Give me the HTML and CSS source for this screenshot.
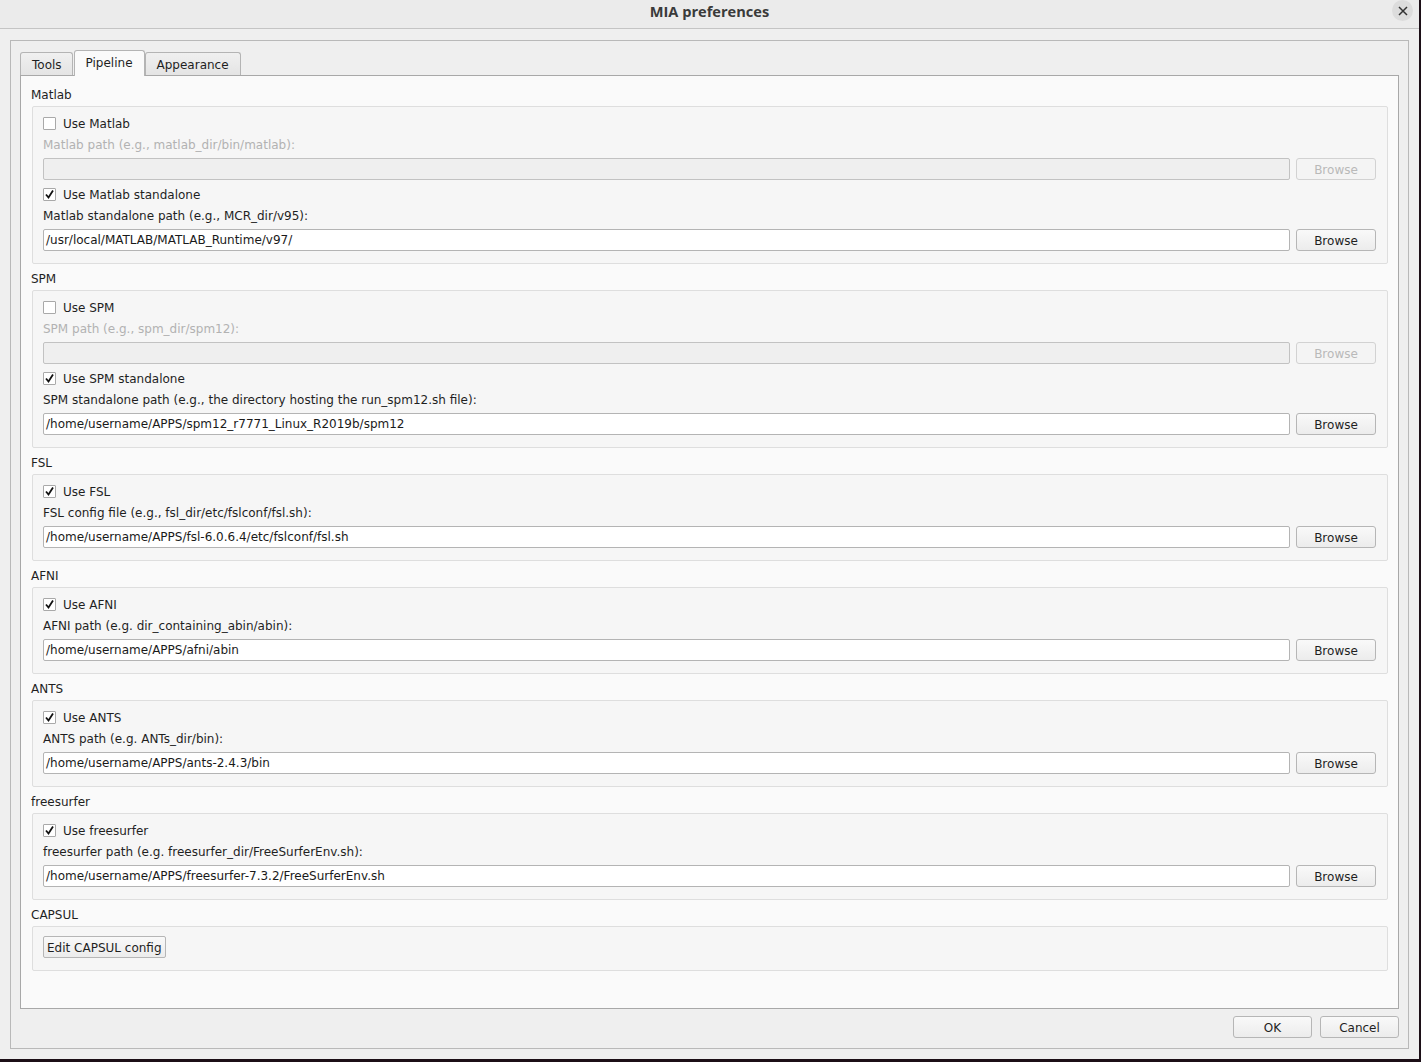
FILE: index.html
```html
<!DOCTYPE html>
<html>
<head>
<meta charset="utf-8">
<link rel="stylesheet" href="styles.css">
</head>
<body>
<div class="dialog">
  <div class="titlebar">
    <span class="title">MIA preferences</span>
    <span class="close"><svg width="10" height="10" viewBox="0 0 10 10"><path d="M1 1L9 9M9 1L1 9" stroke="#333" stroke-width="1.5"/></svg></span>
  </div>
  <div class="frame">
    <div class="tabs">
      <div class="tab first">Tools</div>
      <div class="tab active">Pipeline</div>
      <div class="tab">Appearance</div>
    </div>
    <div class="pane">
      <div class="sec-label">Matlab</div>
      <div class="group">
        <div class="check"><span class="box"></span>Use Matlab</div>
        <div class="lbl disabled">Matlab path (e.g., matlab_dir/bin/matlab):</div>
        <div class="field"><div class="input disabled"></div><div class="btn disabled">Browse</div></div>
        <div class="check"><span class="box on"><svg width="11" height="11" viewBox="0 0 11 11"><path d="M2 5.5L4.5 8.5L9 1.5" fill="none" stroke="#111" stroke-width="1.8"/></svg></span>Use Matlab standalone</div>
        <div class="lbl">Matlab standalone path (e.g., MCR_dir/v95):</div>
        <div class="field"><div class="input">/usr/local/MATLAB/MATLAB_Runtime/v97/</div><div class="btn">Browse</div></div>
      </div>

      <div class="sec-label">SPM</div>
      <div class="group">
        <div class="check"><span class="box"></span>Use SPM</div>
        <div class="lbl disabled">SPM path (e.g., spm_dir/spm12):</div>
        <div class="field"><div class="input disabled"></div><div class="btn disabled">Browse</div></div>
        <div class="check"><span class="box on"><svg width="11" height="11" viewBox="0 0 11 11"><path d="M2 5.5L4.5 8.5L9 1.5" fill="none" stroke="#111" stroke-width="1.8"/></svg></span>Use SPM standalone</div>
        <div class="lbl">SPM standalone path (e.g., the directory hosting the run_spm12.sh file):</div>
        <div class="field"><div class="input">/home/username/APPS/spm12_r7771_Linux_R2019b/spm12</div><div class="btn">Browse</div></div>
      </div>

      <div class="sec-label">FSL</div>
      <div class="group">
        <div class="check"><span class="box on"><svg width="11" height="11" viewBox="0 0 11 11"><path d="M2 5.5L4.5 8.5L9 1.5" fill="none" stroke="#111" stroke-width="1.8"/></svg></span>Use FSL</div>
        <div class="lbl">FSL config file (e.g., fsl_dir/etc/fslconf/fsl.sh):</div>
        <div class="field"><div class="input">/home/username/APPS/fsl-6.0.6.4/etc/fslconf/fsl.sh</div><div class="btn">Browse</div></div>
      </div>

      <div class="sec-label">AFNI</div>
      <div class="group">
        <div class="check"><span class="box on"><svg width="11" height="11" viewBox="0 0 11 11"><path d="M2 5.5L4.5 8.5L9 1.5" fill="none" stroke="#111" stroke-width="1.8"/></svg></span>Use AFNI</div>
        <div class="lbl">AFNI path (e.g. dir_containing_abin/abin):</div>
        <div class="field"><div class="input">/home/username/APPS/afni/abin</div><div class="btn">Browse</div></div>
      </div>

      <div class="sec-label">ANTS</div>
      <div class="group">
        <div class="check"><span class="box on"><svg width="11" height="11" viewBox="0 0 11 11"><path d="M2 5.5L4.5 8.5L9 1.5" fill="none" stroke="#111" stroke-width="1.8"/></svg></span>Use ANTS</div>
        <div class="lbl">ANTS path (e.g. ANTs_dir/bin):</div>
        <div class="field"><div class="input">/home/username/APPS/ants-2.4.3/bin</div><div class="btn">Browse</div></div>
      </div>

      <div class="sec-label">freesurfer</div>
      <div class="group">
        <div class="check"><span class="box on"><svg width="11" height="11" viewBox="0 0 11 11"><path d="M2 5.5L4.5 8.5L9 1.5" fill="none" stroke="#111" stroke-width="1.8"/></svg></span>Use freesurfer</div>
        <div class="lbl">freesurfer path (e.g. freesurfer_dir/FreeSurferEnv.sh):</div>
        <div class="field"><div class="input">/home/username/APPS/freesurfer-7.3.2/FreeSurferEnv.sh</div><div class="btn">Browse</div></div>
      </div>

      <div class="sec-label">CAPSUL</div>
      <div class="group">
        <div class="row"><div class="btn capsul">Edit CAPSUL config</div></div>
      </div>
    </div>
    <div class="footer">
      <div class="btn wide">OK</div>
      <div class="btn wide">Cancel</div>
    </div>
  </div>
</div>
</body>
</html>
```

FILE: styles.css
```css
* { box-sizing: border-box; }
html, body { margin: 0; padding: 0; }
body {
  background: #1c0f17;
  width: 1421px;
  height: 1062px;
  overflow: hidden;
  font-family: "DejaVu Sans", sans-serif;
  font-size: 12px;
  color: #1f1f1f;
}
.dialog {
  width: 1419px;
  height: 1059px;
  background: #efefef;
}
.titlebar {
  height: 29px;
  background: #ebebeb;
  border-bottom: 1px solid #c4c4c4;
  display: flex;
  align-items: center;
  justify-content: center;
  position: relative;
}
.title {
  font-family: "Open Sans", "DejaVu Sans", sans-serif;
  font-weight: 700;
  font-size: 14.6px;
  color: #3a3a3a;
  margin-top: -7px;
}
.close {
  position: absolute;
  right: 6px;
  top: 0px;
  width: 21px;
  height: 21px;
  border-radius: 50%;
  background: #dcdcdc;
  display: flex;
  align-items: center;
  justify-content: center;
}
.frame {
  margin: 11px 0 0 10px;
  width: 1399px;
  height: 1009px;
  border: 1px solid #b9b9b9;
  padding: 9px 9px 0 9px;
}
.tabs {
  display: flex;
  align-items: flex-end;
  height: 25px;
  position: relative;
  z-index: 2;
}
.tab {
  height: 23px;
  padding: 2px 11px 0 11px;
  border: 1px solid #b4b4b4;
  border-bottom: none;
  border-radius: 3px 3px 0 0;
  background: linear-gradient(#f0f0f0, #e4e4e4);
  display: flex;
  align-items: center;
  color: #1f1f1f;
}
.tab.first { padding: 2px 10px 0 11px; }
.tab.active {
  height: 26px;
  margin-bottom: -1px;
  background: #fafafa;
  padding: 0 11px 2px 11px;
  margin-left: 1px;
}
.pane {
  height: 934px;
  background: #fafafa;
  border: 1px solid #a8a8a8;
  padding: 11px 10px 0 11px;
  display: flex;
  flex-direction: column;
}
.sec-label {
  height: 14px;
  line-height: 16px;
  margin: 0 0 5px -1px;
}
.group {
  background: #f6f6f6;
  border: 1px solid #dedede;
  border-radius: 2px;
  padding: 9px 11px 12px 10px;
  display: flex;
  flex-direction: column;
  gap: 7px;
  margin-bottom: 7px;
}
.check {
  height: 14px;
  display: flex;
  align-items: center;
  line-height: 16px;
  padding-top: 1px;
}
.box {
  width: 13px;
  height: 13px;
  border: 1px solid #a9a9a9;
  background: #fff;
  border-radius: 1px;
  margin-right: 7px;
  display: flex;
  align-items: center;
  justify-content: center;
  flex: none;
}
.lbl {
  height: 14px;
  line-height: 16px;
}
.disabled { color: #b2b2b2; }
.field {
  display: flex;
  gap: 6px;
  height: 22px;
}
.input {
  flex: 1;
  background: #fff;
  border: 1px solid #b4b4b4;
  border-radius: 2px;
  padding: 0 2px;
  line-height: 21px;
  color: #1a1a1a;
}
.input.disabled {
  background: #efefef;
  border-color: #c2c2c2;
}
.btn {
  width: 80px;
  height: 22px;
  border: 1px solid #b6b6b6;
  border-radius: 3px;
  background: linear-gradient(#f9f9f9, #ececec);
  display: flex;
  align-items: center;
  justify-content: center;
  color: #1f1f1f;
  padding-top: 1px;
}
.btn.disabled {
  color: #b9b9b9;
  border-color: #d2d2d2;
  background: #f4f4f4;
}
.row { display: flex; }
.btn.capsul {
  width: auto;
  padding: 1px 3px 0 3px;
  border-radius: 2px;
}
.footer {
  display: flex;
  justify-content: flex-end;
  gap: 8px;
  margin-top: 7px;
}
.btn.wide { width: 79px; }
```
